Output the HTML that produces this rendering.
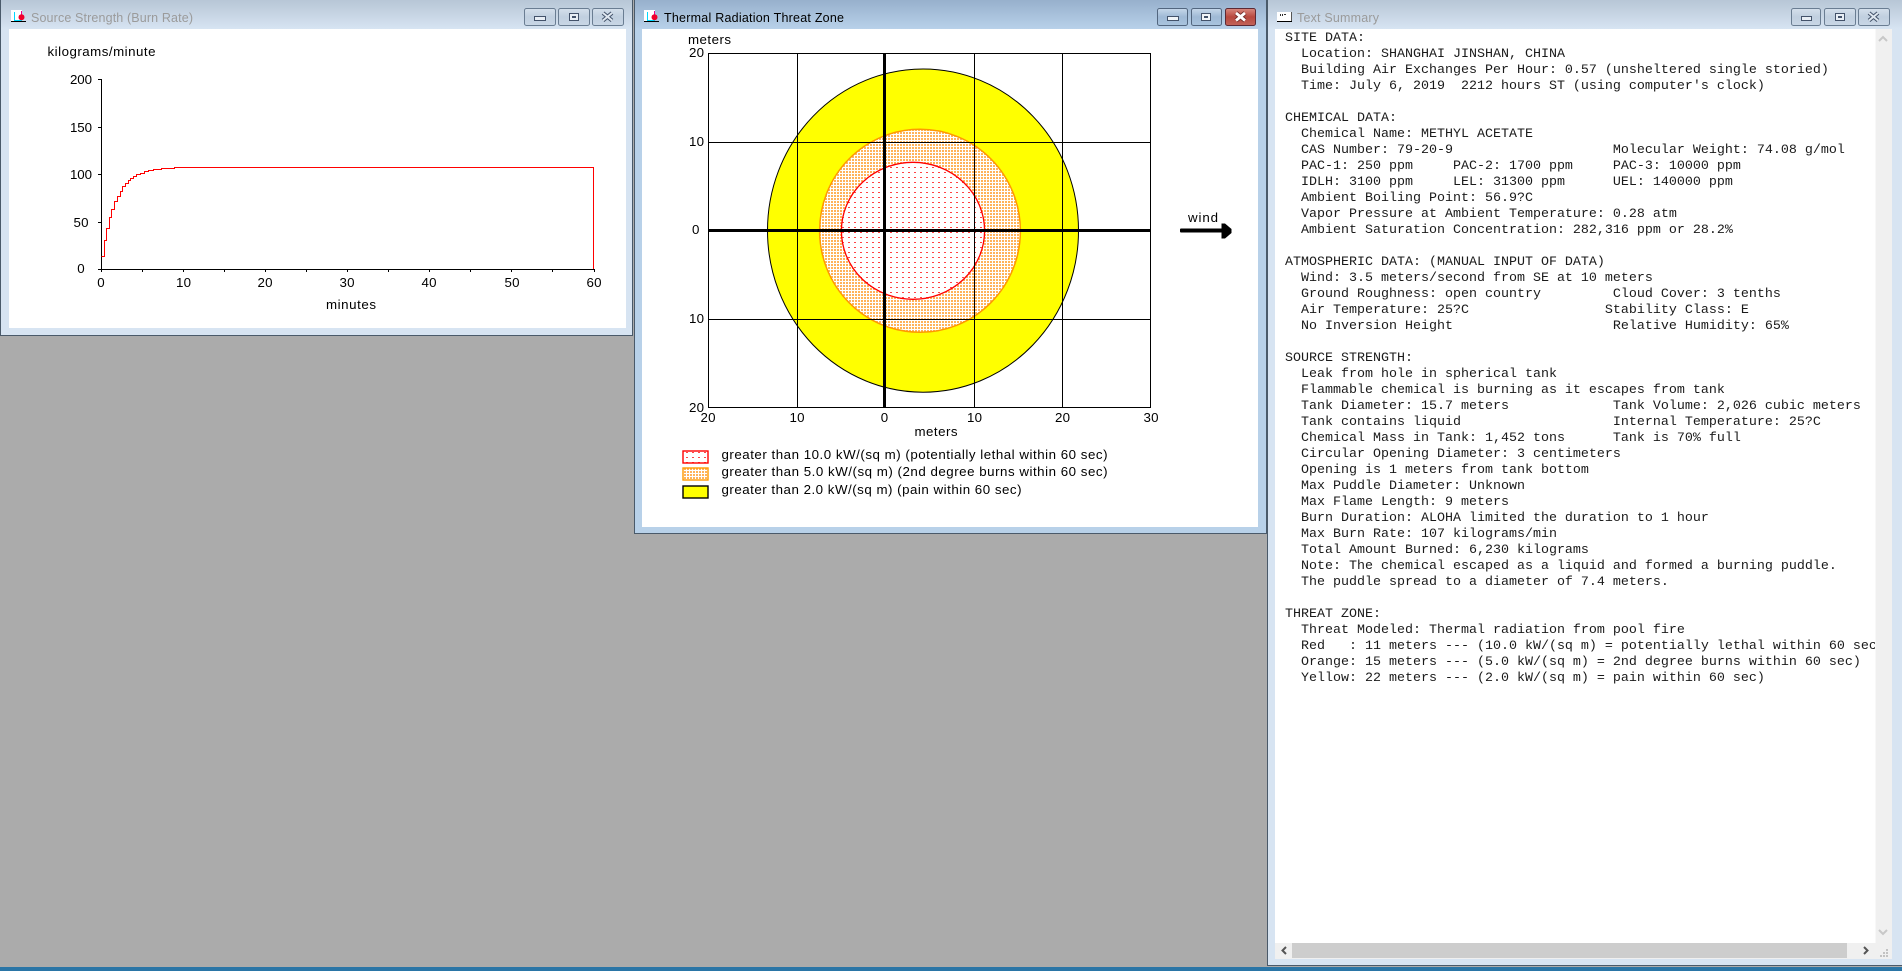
<!DOCTYPE html>
<html lang="en">
<head>
<meta charset="utf-8">
<title>ALOHA</title>
<style>
html,body{margin:0;padding:0;background:#ababab;width:1902px;height:971px;overflow:hidden}
svg{position:absolute;left:0;top:0;display:block}
text{font-family:"Liberation Sans",sans-serif;font-size:13.3px;fill:#000}
.t{font-size:12.5px}
pre{position:absolute;left:1285px;top:31px;width:590px;height:910px;margin:0;overflow:hidden;font-family:"Liberation Mono",monospace;font-size:13.333px;line-height:16px;color:#1a1a1a;white-space:pre}
</style>
</head>
<body>
<svg width="1902" height="971" viewBox="0 0 1902 971" xmlns="http://www.w3.org/2000/svg">
<defs>
<linearGradient id="ti" x1="0" y1="0" x2="0" y2="1"><stop offset="0" stop-color="#b7c6d6"/><stop offset="1" stop-color="#d7e4f2"/></linearGradient>
<linearGradient id="ta" x1="0" y1="0" x2="0" y2="1"><stop offset="0" stop-color="#97b0cc"/><stop offset="1" stop-color="#b8d1e9"/></linearGradient>
<linearGradient id="bi" x1="0" y1="0" x2="0" y2="1"><stop offset="0" stop-color="#d5e0ec"/><stop offset=".5" stop-color="#c0cfdf"/><stop offset="1" stop-color="#c9d7e6"/></linearGradient>
<linearGradient id="ba" x1="0" y1="0" x2="0" y2="1"><stop offset="0" stop-color="#c7d8ea"/><stop offset=".5" stop-color="#9fb9d5"/><stop offset="1" stop-color="#a9c4de"/></linearGradient>
<linearGradient id="br" x1="0" y1="0" x2="0" y2="1"><stop offset="0" stop-color="#d98a80"/><stop offset=".5" stop-color="#b8483e"/><stop offset="1" stop-color="#c2655b"/></linearGradient>
<pattern id="po" width="3" height="3" patternUnits="userSpaceOnUse"><rect width="3" height="3" fill="#fff"/><rect width="2" height="2" fill="#ffb35a"/></pattern>
<pattern id="pr" width="6" height="5" patternUnits="userSpaceOnUse"><rect width="6" height="5" fill="#fff"/><rect x="2" y="2" width="2" height="1" fill="#f44"/></pattern>
</defs>

<!-- desktop -->
<rect width="1902" height="971" fill="#ababab"/>
<rect y="967" width="1902" height="4" fill="#2a75a6"/>

<!-- window 1 -->
<rect x="0" y="0" width="633" height="336" fill="#4a5a6a"/>
<rect x="1" y="0" width="631" height="335" fill="#d7e4f2"/>
<rect x="1" y="0" width="631" height="29" fill="url(#ti)"/>
<rect x="9" y="29" width="617" height="299" fill="#fff"/>
<g shape-rendering="crispEdges">
<rect x="11" y="10" width="11" height="11" fill="#fff"/>
<rect x="14" y="12" width="1" height="8" fill="#00d8ff"/><rect x="14" y="20" width="8" height="1" fill="#00d8ff"/>
<rect x="21" y="11" width="1" height="4" fill="#f0008a"/>
<rect x="11" y="21" width="15" height="1" fill="#000"/>
</g>
<circle cx="21.500" cy="17.300" r="3" fill="#f0002a"/>
<text class="t" x="31" y="22" style="fill:#9b9b9b" textLength="162">Source Strength (Burn Rate)</text>
<!-- buttons w1 -->
<rect x="524.500" y="8.500" width="31" height="17" rx="2" fill="url(#bi)" stroke="#6a7d92"/>
<rect x="558.500" y="8.500" width="31" height="17" rx="2" fill="url(#bi)" stroke="#6a7d92"/>
<rect x="592.500" y="8.500" width="31" height="17" rx="2" fill="url(#bi)" stroke="#6a7d92"/>
<rect x="534.500" y="16.500" width="11" height="4" fill="#e8eef5" stroke="#43526a"/>
<rect x="569.500" y="13.500" width="9" height="7" fill="#e8eef5" stroke="#43526a"/><rect x="572" y="16" width="4" height="2" fill="#43526a"/>
<path d="M603 13l9 7.500M612 13l-9 7.500" fill="none" stroke="#43526a" stroke-width="4"/>
<path d="M603 13l9 7.500M612 13l-9 7.500" fill="none" stroke="#dfe7f0" stroke-width="2"/>

<!-- chart 1 -->
<text x="47.500" y="56" textLength="108">kilograms/minute</text>
<g text-anchor="middle">
<text x="81" y="84" textLength="22">200</text>
<text x="81" y="132" textLength="22">150</text>
<text x="81" y="179" textLength="22">100</text>
<text x="81" y="227" textLength="15">50</text>
<text x="81" y="273">0</text>
<text x="101" y="287">0</text>
<text x="183.500" y="287" textLength="15">10</text>
<text x="265" y="287" textLength="15">20</text>
<text x="347" y="287" textLength="15">30</text>
<text x="429" y="287" textLength="15">40</text>
<text x="512" y="287" textLength="15">50</text>
<text x="594" y="287" textLength="15">60</text>
<text x="351" y="309" textLength="50">minutes</text>
</g>
<g shape-rendering="crispEdges" stroke="#000" fill="none">
<path d="M101.500 79V270M100 269.500H595"/>
<path d="M98 79.500h3M98 127.500h3M98 174.500h3M98 222.500h3M98 269.500h3"/>
<path d="M101.500 270v2M142.500 270v2M183.500 270v2M224.500 270v2M265.500 270v2M306.500 270v2M347.500 270v2M388.500 270v2M429.500 270v2M470.500 270v2M511.500 270v2M552.500 270v2M594.500 270v2"/>
</g>
<path shape-rendering="crispEdges" fill="none" stroke="#f00" d="M101.500 256.500H104.500V240.500H106.500V228.500H109.500V217.500H111.500V209.500H114.500V201.500H117.500V196.500H120.500V191.500H122.500V186.500H125.500V183.500H128.500V180.500H130.500V178.500H133.500V176.500H136.500V174.500H140.500V173.500H144.500V171.500H148.500V170.500H153.500V169.500H161.500V168.500H174.500V167.500H593.500V269"/>

<!-- window 2 -->
<rect x="634" y="0" width="633" height="534" fill="#4a5a6a"/>
<rect x="635" y="0" width="631" height="533" fill="#b8d1e9"/>
<rect x="635" y="0" width="631" height="29" fill="url(#ta)"/>
<rect x="642" y="29" width="616" height="498" fill="#fff"/>
<g shape-rendering="crispEdges">
<rect x="644" y="10" width="11" height="11" fill="#fff"/>
<rect x="647" y="12" width="1" height="8" fill="#00d8ff"/><rect x="647" y="20" width="8" height="1" fill="#00d8ff"/>
<rect x="654" y="11" width="1" height="4" fill="#f0008a"/>
<rect x="644" y="21" width="15" height="1" fill="#000"/>
</g>
<circle cx="654.500" cy="17.300" r="3" fill="#f0002a"/>
<text class="t" x="664" y="22" textLength="180">Thermal Radiation Threat Zone</text>
<rect x="1157.500" y="8.500" width="30" height="17" rx="2" fill="url(#ba)" stroke="#52667f"/>
<rect x="1191.500" y="8.500" width="30" height="17" rx="2" fill="url(#ba)" stroke="#52667f"/>
<rect x="1225.500" y="8.500" width="30" height="17" rx="2" fill="url(#br)" stroke="#5c2a35"/>
<rect x="1167.500" y="16.500" width="11" height="4" fill="#f0f4f8" stroke="#43526a"/>
<rect x="1201.500" y="13.500" width="9" height="7" fill="#f0f4f8" stroke="#43526a"/><rect x="1204" y="16" width="4" height="2" fill="#43526a"/>
<path d="M1236 13l9 7.500M1245 13l-9 7.500" fill="none" stroke="#6d2a28" stroke-width="4.600"/>
<path d="M1236 13l9 7.500M1245 13l-9 7.500" fill="none" stroke="#fff" stroke-width="2.800"/>

<!-- threat plot -->
<text x="688" y="44" textLength="43">meters</text>
<ellipse cx="923" cy="230.600" rx="155.500" ry="161.600" fill="#ff0" stroke="#000"/>
<ellipse cx="920" cy="230.800" rx="100.400" ry="101.500" fill="url(#po)" stroke="#ff9900" stroke-width="1.500"/>
<ellipse cx="913" cy="230.800" rx="71.600" ry="68.500" fill="url(#pr)" stroke="#f00" stroke-width="1.300"/>
<g shape-rendering="crispEdges">
<rect x="708.500" y="53.500" width="442" height="354" fill="none" stroke="#000"/>
<path d="M797.500 53V408M974.500 53V408M1062.500 53V408M708 142.500H1151M708 319.500H1151" stroke="#000" fill="none"/>
<rect x="883" y="53" width="3" height="355" fill="#000"/>
<rect x="708" y="229" width="443" height="3" fill="#000"/>
</g>
<text x="689" y="57" textLength="15">20</text>
<text x="689" y="146" textLength="15">10</text>
<text x="692" y="234">0</text>
<text x="689" y="323" textLength="15">10</text>
<text x="689" y="412" textLength="15">20</text>
<g text-anchor="middle">
<text x="708" y="422" textLength="15">20</text>
<text x="797" y="422" textLength="15">10</text>
<text x="884.500" y="422">0</text>
<text x="974.500" y="422" textLength="15">10</text>
<text x="1062.500" y="422" textLength="15">20</text>
<text x="1151" y="422" textLength="15">30</text>
<text x="936" y="436" textLength="43">meters</text>
</g>
<!-- wind -->
<text x="1188" y="222" textLength="30">wind</text>
<rect x="1180" y="228.500" width="43" height="4" rx="1" fill="#000"/>
<path d="M1221.500 223.500H1225L1231.500 229V233L1225 238.500H1221.500Z" fill="#000"/>
<!-- legend -->
<rect x="683" y="451" width="25" height="12" fill="url(#pr)" stroke="#f00" stroke-width="1.400"/>
<rect x="683" y="468" width="25" height="12" fill="url(#po)" stroke="#ff9900" stroke-width="1.400"/>
<rect x="683" y="486" width="25" height="12" fill="#ff0" stroke="#000" stroke-width="1.400"/>
<text x="721.500" y="459" textLength="386">greater than 10.0 kW/(sq m) (potentially lethal within 60 sec)</text>
<text x="721.500" y="476" textLength="386">greater than 5.0 kW/(sq m) (2nd degree burns within 60 sec)</text>
<text x="721.500" y="494" textLength="300">greater than 2.0 kW/(sq m) (pain within 60 sec)</text>

<!-- window 3 -->
<rect x="1267" y="0" width="635" height="966" fill="#4a5a6a"/>
<rect x="1268" y="0" width="634" height="965" fill="#d7e4f2"/>
<rect x="1268" y="0" width="634" height="29" fill="url(#ti)"/>
<rect x="1275" y="29" width="617" height="930" fill="#fff"/>
<rect x="1875.500" y="29" width="16.500" height="930" fill="#f0f0f0"/>
<rect x="1275" y="943" width="617" height="16" fill="#f0f0f0"/>
<rect x="1292" y="943" width="555" height="15" fill="#cdcdcd"/>
<path d="M1879 41l4-4 4 4M1879 930l4 4 4-4" fill="none" stroke="#c8c8c8" stroke-width="2"/>
<path d="M1286 947l-3.500 3.500 3.500 3.500M1864 947l3.500 3.500-3.500 3.500" fill="none" stroke="#555" stroke-width="2"/>
<g fill="#c2c2c2" shape-rendering="crispEdges"><rect x="1886" y="949" width="2" height="2"/><rect x="1883" y="952" width="2" height="2"/><rect x="1886" y="952" width="2" height="2"/><rect x="1880" y="955" width="2" height="2"/><rect x="1883" y="955" width="2" height="2"/><rect x="1886" y="955" width="2" height="2"/></g>
<g shape-rendering="crispEdges">
<rect x="1277" y="12" width="14" height="9" fill="#fff"/>
<rect x="1277" y="21" width="15" height="1" fill="#000"/>
<rect x="1291" y="12" width="1" height="9" fill="#555"/>
<rect x="1280" y="14" width="1" height="2" fill="#333"/><rect x="1282" y="14" width="1" height="2" fill="#333"/><rect x="1284" y="14" width="2" height="1" fill="#333"/>
</g>
<text class="t" x="1297" y="22" style="fill:#9b9b9b" textLength="82">Text Summary</text>
<rect x="1791.500" y="8.500" width="29" height="17" rx="2" fill="url(#bi)" stroke="#6a7d92"/>
<rect x="1824.500" y="8.500" width="31" height="17" rx="2" fill="url(#bi)" stroke="#6a7d92"/>
<rect x="1858.500" y="8.500" width="31" height="17" rx="2" fill="url(#bi)" stroke="#6a7d92"/>
<rect x="1801.500" y="16.500" width="10" height="4" fill="#e8eef5" stroke="#43526a"/>
<rect x="1835.500" y="13.500" width="9" height="7" fill="#e8eef5" stroke="#43526a"/><rect x="1838" y="16" width="4" height="2" fill="#43526a"/>
<path d="M1869 13l9 7.500M1878 13l-9 7.500" fill="none" stroke="#43526a" stroke-width="4"/>
<path d="M1869 13l9 7.500M1878 13l-9 7.500" fill="none" stroke="#dfe7f0" stroke-width="2"/>
</svg>
<pre>SITE DATA:
  Location: SHANGHAI JINSHAN, CHINA
  Building Air Exchanges Per Hour: 0.57 (unsheltered single storied)
  Time: July 6, 2019  2212 hours ST (using computer's clock)

CHEMICAL DATA:
  Chemical Name: METHYL ACETATE
  CAS Number: 79-20-9                    Molecular Weight: 74.08 g/mol
  PAC-1: 250 ppm     PAC-2: 1700 ppm     PAC-3: 10000 ppm
  IDLH: 3100 ppm     LEL: 31300 ppm      UEL: 140000 ppm
  Ambient Boiling Point: 56.9?C
  Vapor Pressure at Ambient Temperature: 0.28 atm
  Ambient Saturation Concentration: 282,316 ppm or 28.2%

ATMOSPHERIC DATA: (MANUAL INPUT OF DATA)
  Wind: 3.5 meters/second from SE at 10 meters
  Ground Roughness: open country         Cloud Cover: 3 tenths
  Air Temperature: 25?C                 Stability Class: E
  No Inversion Height                    Relative Humidity: 65%

SOURCE STRENGTH:
  Leak from hole in spherical tank
  Flammable chemical is burning as it escapes from tank
  Tank Diameter: 15.7 meters             Tank Volume: 2,026 cubic meters
  Tank contains liquid                   Internal Temperature: 25?C
  Chemical Mass in Tank: 1,452 tons      Tank is 70% full
  Circular Opening Diameter: 3 centimeters
  Opening is 1 meters from tank bottom
  Max Puddle Diameter: Unknown
  Max Flame Length: 9 meters
  Burn Duration: ALOHA limited the duration to 1 hour
  Max Burn Rate: 107 kilograms/min
  Total Amount Burned: 6,230 kilograms
  Note: The chemical escaped as a liquid and formed a burning puddle.
  The puddle spread to a diameter of 7.4 meters.

THREAT ZONE:
  Threat Modeled: Thermal radiation from pool fire
  Red   : 11 meters --- (10.0 kW/(sq m) = potentially lethal within 60 sec)
  Orange: 15 meters --- (5.0 kW/(sq m) = 2nd degree burns within 60 sec)
  Yellow: 22 meters --- (2.0 kW/(sq m) = pain within 60 sec)</pre>
</body>
</html>
